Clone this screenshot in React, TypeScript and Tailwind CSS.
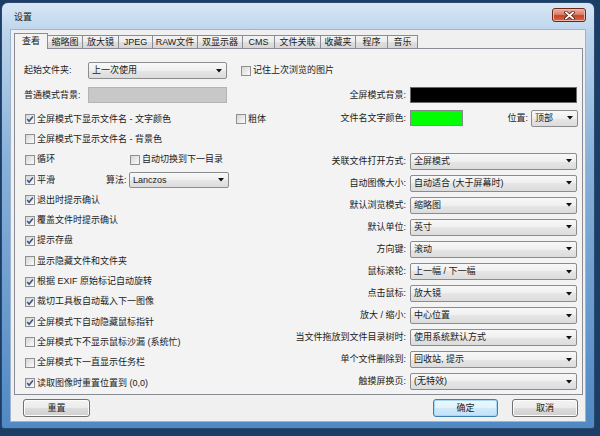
import React from 'react'

const Check = ({ checked }: { checked?: boolean }) => (
  <span className="flex h-[10px] w-[10px] shrink-0 items-center justify-center border border-[#8e8f8f] bg-[linear-gradient(135deg,#d6d6d6,#fbfbfb)]">
    {checked && (
      <svg width="8" height="8" viewBox="0 0 8 8">
        <path d="M1.2 4.1 L3.1 6.3 L6.9 1.4" fill="none" stroke="#3b5587" strokeWidth="1.6" />
      </svg>
    )}
  </span>
)

const CheckRow = ({ checked, label }: { checked?: boolean; label: string }) => (
  <span className="flex items-center gap-[2px] whitespace-nowrap">
    <Check checked={checked} />
    <span>{label}</span>
  </span>
)

const Select = ({ value, className }: { value: string; className: string }) => (
  <div
    className={`flex shrink-0 items-center justify-between rounded-[2px] border border-[#8b8c8e] bg-[linear-gradient(#f8f8f8,#efefef_50%,#e6e6e6_50%,#dcdcdc)] pl-[3px] pr-[4px] ${className}`}>
    <span className="whitespace-nowrap">{value}</span>
    <svg width="6" height="4" viewBox="0 0 6 4">
      <path d="M0 0 H6 L3 3.5 Z" fill="#111" />
    </svg>
  </div>
)

const Button = ({ label, primary }: { label: string; primary?: boolean }) => (
  <div
    className={`flex h-[18px] items-center justify-center rounded-[3px] border ${
      primary
        ? 'w-[65px] border-[#3c7fb1] bg-[linear-gradient(#eef7fd,#e2f2fc_50%,#cfeafb_50%,#bfe2f8)] shadow-[inset_0_0_0_1px_#a9d8f5]'
        : 'border-[#707070] bg-[linear-gradient(#f3f3f3,#ebebeb_50%,#dddddd_50%,#cfcfcf)] shadow-[inset_0_0_0_1px_#fcfcfc]'
    }`}>
    {label}
  </div>
)

const tabs: [string, string][] = [
  ['缩略图', 'w-[36px]'],
  ['放大镜', 'w-[37px]'],
  ['JPEG', 'w-[35px]'],
  ['RAW文件', 'w-[46px]'],
  ['双显示器', 'w-[46px]'],
  ['CMS', 'w-[33px]'],
  ['文件关联', 'w-[47px]'],
  ['收藏夹', 'w-[36px]'],
  ['程序', 'w-[33px]'],
  ['音乐', 'w-[31px]']
]

const simpleChecks: [string, boolean][] = [
  ['退出时提示确认', true],
  ['覆盖文件时提示确认', true],
  ['提示存盘', true],
  ['显示隐藏文件和文件夹', false],
  ['根据 EXIF 原始标记自动旋转', true],
  ['裁切工具板自动载入下一图像', true],
  ['全屏模式下自动隐藏鼠标指针', true],
  ['全屏模式下不显示鼠标沙漏 (系统忙)', false],
  ['全屏模式下一直显示任务栏', false],
  ['读取图像时重置位置到 (0,0)', true]
]

const options: [string, string][] = [
  ['关联文件打开方式:', '全屏模式'],
  ['自动图像大小:', '自动适合 (大于屏幕时)'],
  ['默认浏览模式:', '缩略图'],
  ['默认单位:', '英寸'],
  ['方向键:', '滚动'],
  ['鼠标滚轮:', '上一幅 / 下一幅'],
  ['点击鼠标:', '放大镜'],
  ['放大 / 缩小:', '中心位置'],
  ['当文件拖放到文件目录树时:', '使用系统默认方式'],
  ['单个文件删除到:', '回收站, 提示'],
  ['触摸屏换页:', '(无特效)']
]

export default function App() {
  return (
    <div className="h-[436px] w-[600px] overflow-hidden bg-[#1b3d66] pl-px pt-[2px] font-['Liberation_Sans','Noto_Sans_CJK_SC',sans-serif] text-[9px] leading-none text-[#1a1a1a]">
      <div className="flex h-[427px] w-[594px] flex-col rounded-t-[7px] rounded-b-[3px] border border-[#2b4a70] bg-[linear-gradient(180deg,#d8e7f5_0%,#bcd4ec_7%,#8ab2da_35%,#5089c4_100%)]">
        {/* title bar */}
        <div className="flex h-[26px] shrink-0 items-start justify-between pl-[12px] pr-[8px]">
          <span className="mt-[10px]">设置</span>
          <div className="mt-[5px] flex h-[14px] w-[34px] items-center justify-center rounded-[3px] border border-[#6d2519] bg-[linear-gradient(#eab0a2,#dc806b_45%,#c8432a_55%,#d5674a)] shadow-[inset_0_0_0_1px_#f0b7a8]">
            <svg width="11" height="9" viewBox="0 0 11 9">
              <path d="M2 1.5 L9 7.5 M9 1.5 L2 7.5" stroke="#5a1d12" strokeWidth="3.4" strokeLinecap="square" />
              <path d="M2 1.5 L9 7.5 M9 1.5 L2 7.5" stroke="#ffffff" strokeWidth="1.8" strokeLinecap="square" />
            </svg>
          </div>
        </div>

        {/* client area */}
        <div className="mx-[8px] flex h-[393px] flex-col border border-[#9fb5cf] bg-[#f0f0f0] pl-[3px] pr-[2px] pt-[3px]">
          {/* tabs */}
          <div className="flex h-[15px] items-end">
            <div className="relative z-10 -mb-px flex h-[16px] w-[34px] items-center justify-center border border-b-0 border-[#898c95] bg-[#f3f3f3] pb-[1px]">
              查看
            </div>
            {tabs.map(([name, w]) => (
              <div
                key={name}
                className={`-ml-px flex h-[13px] items-center justify-center border border-b-0 border-[#898c95] bg-[linear-gradient(#f3f3f3,#ececec_50%,#e0e0e0_50%,#d6d6d6)] ${w}`}>
                {name}
              </div>
            ))}
          </div>

          {/* panel */}
          <div className="h-[347px] w-[569px] overflow-hidden border border-[#898c95] bg-[#f3f3f3] pt-[13px]">
            <div className="flex h-[17px] items-center pl-[9px]">
              <span className="w-[64px]">起始文件夹:</span>
              <Select value="上一次使用" className="h-[17px] w-[139px]" />
              <span className="ml-[14px]">
                <CheckRow label="记住上次浏览的图片" />
              </span>
            </div>

            <div className="mt-[8px] flex">
              {/* left column */}
              <div className="w-[281px] shrink-0 pl-[9px]">
                <div className="flex h-[16px] items-center">
                  <span className="w-[64px]">普通模式背景:</span>
                  <div className="h-[16px] w-[139px] border border-[#b4b4b4] bg-[#c8c8c8]" />
                </div>
                <div className="mt-[6px] flex flex-col pl-px">
                  <div className="flex h-[20.3px] items-center">
                    <span className="w-[211px]">
                      <CheckRow checked label="全屏模式下显示文件名 - 文字颜色" />
                    </span>
                    <CheckRow label="粗体" />
                  </div>
                  <div className="flex h-[20.3px] items-center">
                    <CheckRow label="全屏模式下显示文件名 - 背景色" />
                  </div>
                  <div className="flex h-[20.3px] items-center">
                    <span className="w-[105px]">
                      <CheckRow label="循环" />
                    </span>
                    <CheckRow label="自动切换到下一目录" />
                  </div>
                  <div className="flex h-[20.3px] items-center">
                    <span className="w-[81px]">
                      <CheckRow checked label="平滑" />
                    </span>
                    <span className="w-[23px]">算法:</span>
                    <Select value="Lanczos" className="h-[16px] w-[100px]" />
                  </div>
                  {simpleChecks.map(([label, checked]) => (
                    <div key={label} className="flex h-[20.3px] items-center">
                      <CheckRow checked={checked} label={label} />
                    </div>
                  ))}
                </div>
              </div>

              {/* right column */}
              <div className="flex-1 pr-[4px]">
                <div className="flex h-[16px] items-center gap-[4px]">
                  <span className="flex w-[110px] justify-end whitespace-nowrap">全屏模式背景:</span>
                  <div className="h-[16px] w-[167px] border border-[#6a6a6a] bg-black" />
                </div>
                <div className="mt-[7px] flex h-[16px] items-center gap-[4px]">
                  <span className="flex w-[110px] justify-end whitespace-nowrap">文件名文字颜色:</span>
                  <div className="h-[16px] w-[53px] border border-[#8a8a8a] bg-[#00ff00]" />
                  <span className="ml-auto mr-[-1px]">位置:</span>
                  <Select value="顶部" className="h-[17px] w-[47px]" />
                </div>
                <div className="mt-[24px] flex flex-col">
                  {options.map(([label, value]) => (
                    <div key={label} className="flex h-[22.1px] items-center gap-[4px]">
                      <span className="flex w-[110px] justify-end whitespace-nowrap">{label}</span>
                      <Select value={value} className="h-[17px] w-[167px]" />
                    </div>
                  ))}
                </div>
              </div>
            </div>
          </div>

          {/* buttons */}
          <div className="mt-[4px] flex items-center pl-[9px] pr-[5px]">
            <div className="w-[67px]">
              <Button label="重置" />
            </div>
            <div className="ml-auto flex gap-[14px]">
              <Button label="确定" primary />
              <div className="w-[66px]">
                <Button label="取消" />
              </div>
            </div>
          </div>
        </div>
      </div>
    </div>
  )
}
